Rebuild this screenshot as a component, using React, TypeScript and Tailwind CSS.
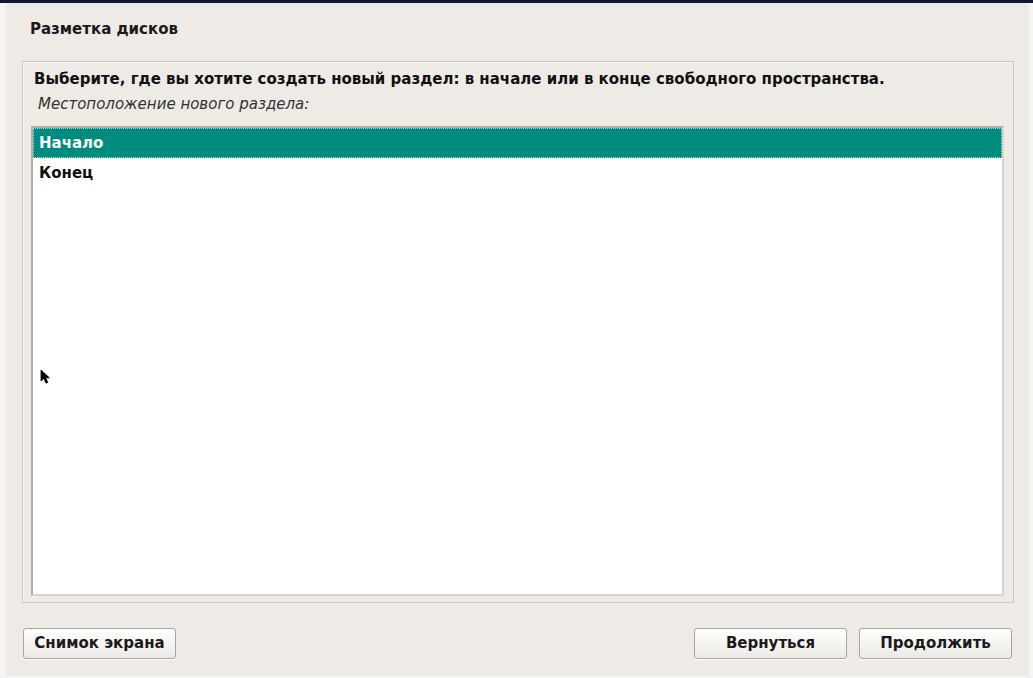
const font = { fontFamily: '"DejaVu Sans", "Noto Sans", sans-serif' };

function Button({ label }: { label: string }) {
  return (
    <button className="h-[31px] w-[153px] rounded-[3px] border border-[#a9a49d] bg-gradient-to-b from-[#ffffff] to-[#ece9e5] text-[15px] font-bold text-[#1a1a1a] shadow-[0_1px_0_#ffffff]">
      {label}
    </button>
  );
}

function Cursor() {
  return (
    <svg
      className="absolute left-[40px] top-[369px]"
      width="12"
      height="16"
      viewBox="0 0 12 16"
    >
      <path d="M1 1 L1 12 L3.8 9.4 L6 14.2 L7.8 13.4 L5.7 8.8 L9.3 8.8 Z" fill="#000" stroke="#000" strokeWidth="0.8" strokeLinejoin="round" />
    </svg>
  );
}

export default function App() {
  return (
    <div
      className="relative flex h-[678px] w-[1033px] flex-col bg-[#f5f4f2]"
      style={font}
    >
      <div className="h-[3px] w-full bg-[#101735]" />
      <div className="mb-[2px] ml-[6px] mr-[4px] flex flex-1 flex-col bg-[#eeebe7]">
        {/* заголовок */}
        <div className="mt-[17px] h-[18px] pl-[24px] text-[15px] font-bold leading-[18px] text-[#1a1a1a]">
          Разметка дисков
        </div>

        {/* рамка вопроса */}
        <div className="ml-[16px] mt-[23px] flex h-[542px] w-[992px] flex-col border border-[#cdc5bb] shadow-[inset_1px_1px_0_#f9f8f6]">
          <div className="pl-[11px] pt-[8px] text-[15px] font-bold leading-[18px] text-[#111]">
            Выберите, где вы хотите создать новый раздел: в начале или в конце свободного пространства.
          </div>
          <div className="pl-[15px] pt-[7px] text-[15px] italic leading-[18px] text-[#333]">
            Местоположение нового раздела:
          </div>

          <div className="ml-[8px] mt-[13px] h-[470px] w-[973px] border-2 border-t-[#b5aca2] border-l-[#b5aca2] border-r-[#d9d3cc] border-b-[#d9d3cc] bg-white">
            <div className="flex h-[30px] items-center border border-dotted border-[#9fe0d8] bg-[#008b7f] pl-[5px] text-[15px] font-bold text-white">
              Начало
            </div>
            <div className="flex h-[30px] items-center pl-[6px] text-[15px] font-bold text-[#111]">
              Конец
            </div>
          </div>
        </div>

        {/* кнопки */}
        <div className="ml-[17px] mr-[17px] mt-[25px] flex">
          <Button label="Снимок экрана" />
          <div className="flex-1" />
          <div className="flex gap-[12px]">
            <Button label="Вернуться" />
            <Button label="Продолжить" />
          </div>
        </div>
      </div>
      <Cursor />
    </div>
  );
}
